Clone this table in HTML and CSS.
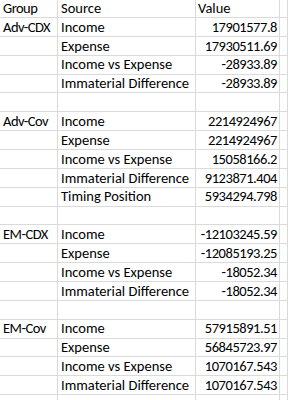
FILE: index.html
```html
<!DOCTYPE html>
<html>
<head>
<meta charset="utf-8">
<link rel="stylesheet" href="styles.css">
</head>
<body>
<div class="sheet">
  <div class="row head"><div class="c grp">Group</div><div class="c">Source</div><div class="c">Value</div><div class="c"></div></div>
  <div class="row"><div class="c grp">Adv-CDX</div><div class="c">Income</div><div class="c num">17901577.8</div><div class="c"></div></div>
  <div class="row"><div class="c"></div><div class="c">Expense</div><div class="c num">17930511.69</div><div class="c"></div></div>
  <div class="row"><div class="c"></div><div class="c">Income vs Expense</div><div class="c num">-28933.89</div><div class="c"></div></div>
  <div class="row"><div class="c"></div><div class="c">Immaterial Difference</div><div class="c num">-28933.89</div><div class="c"></div></div>
  <div class="row"><div class="c"></div><div class="c"></div><div class="c"></div><div class="c"></div></div>
  <div class="row"><div class="c grp">Adv-Cov</div><div class="c">Income</div><div class="c num">2214924967</div><div class="c"></div></div>
  <div class="row"><div class="c"></div><div class="c">Expense</div><div class="c num">2214924967</div><div class="c"></div></div>
  <div class="row"><div class="c"></div><div class="c">Income vs Expense</div><div class="c num">15058166.2</div><div class="c"></div></div>
  <div class="row"><div class="c"></div><div class="c">Immaterial Difference</div><div class="c num">9123871.404</div><div class="c"></div></div>
  <div class="row"><div class="c"></div><div class="c">Timing Position</div><div class="c num">5934294.798</div><div class="c"></div></div>
  <div class="row"><div class="c"></div><div class="c"></div><div class="c"></div><div class="c"></div></div>
  <div class="row"><div class="c grp">EM-CDX</div><div class="c">Income</div><div class="c num">-12103245.59</div><div class="c"></div></div>
  <div class="row"><div class="c"></div><div class="c">Expense</div><div class="c num">-12085193.25</div><div class="c"></div></div>
  <div class="row"><div class="c"></div><div class="c">Income vs Expense</div><div class="c num">-18052.34</div><div class="c"></div></div>
  <div class="row"><div class="c"></div><div class="c">Immaterial Difference</div><div class="c num">-18052.34</div><div class="c"></div></div>
  <div class="row"><div class="c"></div><div class="c"></div><div class="c"></div><div class="c"></div></div>
  <div class="row"><div class="c grp">EM-Cov</div><div class="c">Income</div><div class="c num">57915891.51</div><div class="c"></div></div>
  <div class="row"><div class="c"></div><div class="c">Expense</div><div class="c num">56845723.97</div><div class="c"></div></div>
  <div class="row"><div class="c"></div><div class="c">Income vs Expense</div><div class="c num">1070167.543</div><div class="c"></div></div>
  <div class="row"><div class="c"></div><div class="c">Immaterial Difference</div><div class="c num">1070167.543</div><div class="c"></div></div>
  <div class="row"><div class="c"></div><div class="c"></div><div class="c"></div><div class="c"></div></div>
</div>
</body>
</html>
```

FILE: styles.css
```css
html, body {
  margin: 0;
  padding: 0;
  background: #ffffff;
}
body {
  width: 288px;
  height: 400px;
  overflow: hidden;
  font-family: Carlito, Lato, "Liberation Sans", sans-serif;
  font-size: 14.5px;
  color: #000000;
}
.sheet {
  display: flex;
  flex-direction: column;
}
.row {
  display: grid;
  grid-template-columns: 58px 138px 84px 1fr;
  height: 18.86px;
  flex: none;
}
.row.head {
  height: 18px;
}
.c {
  box-sizing: border-box;
  border-right: 1px solid #dadada;
  border-bottom: 1px solid #dadada;
  padding: 0 3px 0 3px;
  display: flex;
  align-items: center;
  white-space: nowrap;
  overflow: hidden;
  line-height: 1;
}
.c.grp {
  letter-spacing: -0.5px;
}
.c.num {
  justify-content: flex-end;
  padding-right: 2px;
  letter-spacing: -0.45px;
}
.head .c:nth-child(3) {
  padding-left: 2px;
}
```
